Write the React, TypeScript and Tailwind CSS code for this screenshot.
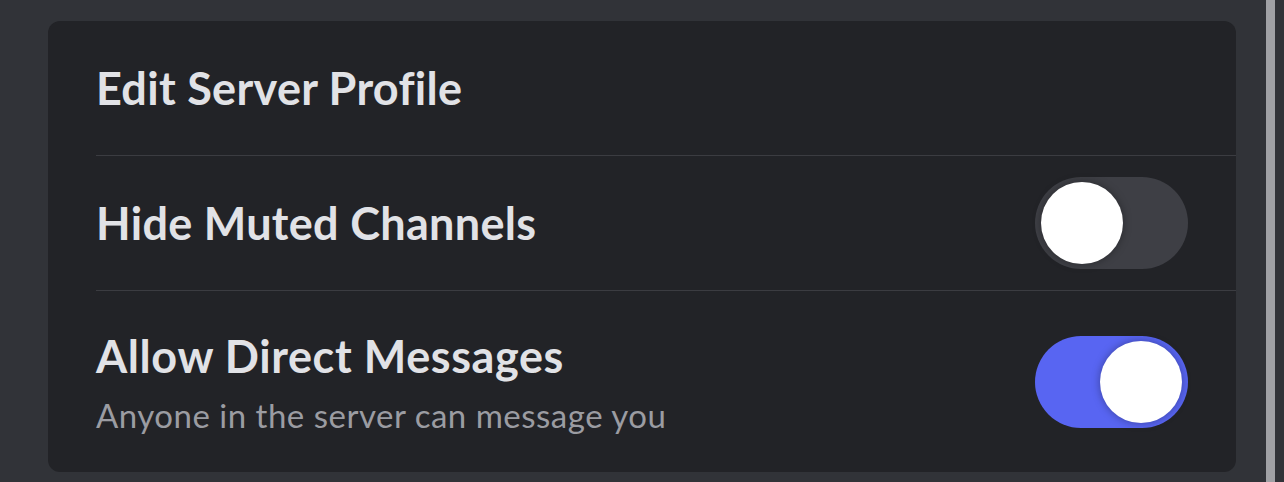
import React from "react";

function Toggle({ on }: { on: boolean }) {
  return (
    <div
      className={
        on
          ? "w-[153px] h-[92px] rounded-full bg-[#5865f2] flex items-center justify-end pr-[6px] shrink-0"
          : "w-[153px] h-[92px] rounded-full bg-[#3e3f45] flex items-center justify-start pl-[6px] shrink-0"
      }
    >
      <div className="w-[82px] h-[82px] rounded-full bg-white shadow-[0_0_8px_rgba(0,0,0,0.35)]" />
    </div>
  );
}

export default function App() {
  const font = { fontFamily: "Lato, 'Noto Sans', sans-serif" };
  return (
    <div className="w-[1284px] h-[482px] bg-[#313338] flex items-start overflow-hidden" style={font}>
      <div className="ml-[48px] mt-[21px] w-[1188px] h-[451px] bg-[#222327] rounded-[12px] flex flex-col">
        <div className="ml-[48px] h-[135px] border-b border-[#3b3c41] flex items-center">
          <span className="text-[45px] font-bold text-[#e1e2e6] leading-none tracking-[0.3px]">
            Edit Server Profile
          </span>
        </div>
        <div className="ml-[48px] h-[135px] border-b border-[#3b3c41] flex items-center justify-between pr-[48px]">
          <span className="text-[45px] font-bold text-[#e1e2e6] leading-none tracking-[0.3px]">
            Hide Muted Channels
          </span>
          <Toggle on={false} />
        </div>
        <div className="ml-[48px] flex-1 flex items-center justify-between pr-[48px]">
          <div className="flex flex-col mt-[2px]">
            <span className="text-[45px] font-bold text-[#e1e2e6] leading-none tracking-[0.6px]">
              Allow Direct Messages
            </span>
            <span className="text-[33px] text-[#9b9ca2] leading-none mt-[20px] tracking-[0.5px]">
              Anyone in the server can message you
            </span>
          </div>
          <Toggle on={true} />
        </div>
      </div>
      <div className="ml-[30px] w-[9px] h-[482px] bg-[#a0a1a5]" />
    </div>
  );
}
